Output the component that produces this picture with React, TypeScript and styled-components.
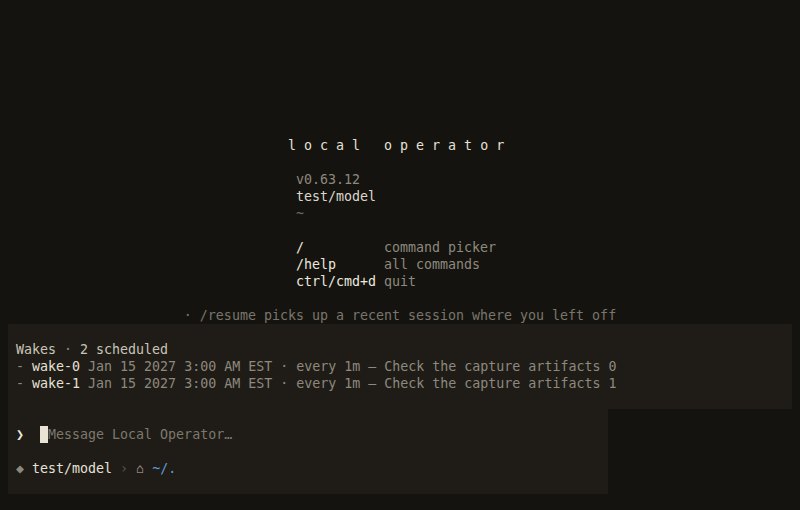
import React from "react";
import styled, { createGlobalStyle } from "styled-components";

const Global = createGlobalStyle`
  html, body { margin: 0; padding: 0; background: #15130f; }
  body { font-family: "DejaVu Sans Mono", "Liberation Mono", monospace; font-size: 13.3px; line-height: 17px; color: #e6e1d6; }
  * { box-sizing: border-box; }
`;

const Screen = styled.div`
  height: 510px;
  display: flex;
  flex-direction: column;
  justify-content: flex-end;
  padding: 0 8px 16px;
  white-space: pre;
`;

const Splash = styled.div`
  display: flex;
  flex-direction: column;
  align-items: center;
`;

const Column = styled.div`
  width: 224px;
  display: flex;
  flex-direction: column;
`;

const Banner = styled.div`
  color: #e6e1d6;
  height: 17px;
`;

const Info = styled.div`
  padding-left: 8px;
  display: flex;
  flex-direction: column;
`;

const Line = styled.div<{ $tone?: "light" | "gray" | "dim" }>`
  height: 17px;
  color: ${(p) => (p.$tone === "gray" ? "#8e897e" : p.$tone === "dim" ? "#6d695f" : "#dcd7cc")};
`;

const CmdRow = styled.div`
  height: 17px;
  display: grid;
  grid-template-columns: 88px auto;
`;

const Key = styled.span`
  color: #ece8de;
`;

const Desc = styled.span`
  color: #8e897e;
`;

const Tip = styled.div`
  height: 17px;
  color: #7a766c;
  text-align: center;
`;

const Panel = styled.div<{ $width?: string }>`
  background: #1f1c17;
  padding: 17px 8px;
  width: ${(p) => p.$width ?? "100%"};
  display: flex;
  flex-direction: column;
`;

const Row = styled.div`
  height: 17px;
  display: flex;
  align-items: stretch;
`;

const T = styled.span<{ $c: string; $b?: boolean }>`
  color: ${(p) => p.$c};
  font-weight: ${(p) => (p.$b ? 700 : 400)};
`;

const Cursor = styled.span`
  display: inline-block;
  width: 8px;
  height: 17px;
  background: #e8e3d5;
`;

const Spacer = styled.div`
  height: 17px;
`;

const LIGHT = "#e6e1d6";
const GRAY = "#8e897e";
const DIM = "#5a564e";

export default function App() {
  const wakes = [0, 1];
  return (
    <>
      <Global />
      <Screen>
        <Splash>
          <Column>
            <Banner>{"l o c a l   o p e r a t o r "}</Banner>
            <Spacer />
            <Info>
              <Line $tone="gray">v0.63.12</Line>
              <Line>test/model</Line>
              <Line $tone="dim">~</Line>
              <Spacer />
              <CmdRow><Key>/</Key><Desc>command picker</Desc></CmdRow>
              <CmdRow><Key>/help</Key><Desc>all commands</Desc></CmdRow>
              <CmdRow><Key>ctrl/cmd+d</Key><Desc>quit</Desc></CmdRow>
            </Info>
            <Spacer />
          </Column>
          <Tip>· /resume picks up a recent session where you left off</Tip>
        </Splash>
        <Panel>
          <Row>
            <T $c="#c9c4b8">Wakes</T>
            <T $c={GRAY}>{" · "}</T>
            <T $c="#c9c4b8">2 scheduled</T>
          </Row>
          {wakes.map((i) => (
            <Row key={i}>
              <T $c={GRAY}>{"- "}</T>
              <T $c={LIGHT}>{`wake-${i}`}</T>
              <T $c={GRAY}>{` Jan 15 2027 3:00 AM EST · every 1m — Check the capture artifacts ${i}`}</T>
            </Row>
          ))}
        </Panel>
        <Panel $width="600px">
          <Row>
            <T $c="#ece8de" $b>{"❯  "}</T>
            <Cursor />
            <T $c="#7d786d">Message Local Operator…</T>
          </Row>
          <Spacer />
          <Row>
            <T $c={GRAY}>{"◆ "}</T>
            <T $c={LIGHT}>test/model</T>
            <T $c={DIM}>{" › "}</T>
            <T $c={GRAY}>{"⌂ "}</T>
            <T $c="#5f9bd6">~/.</T>
          </Row>
        </Panel>
      </Screen>
    </>
  );
}
